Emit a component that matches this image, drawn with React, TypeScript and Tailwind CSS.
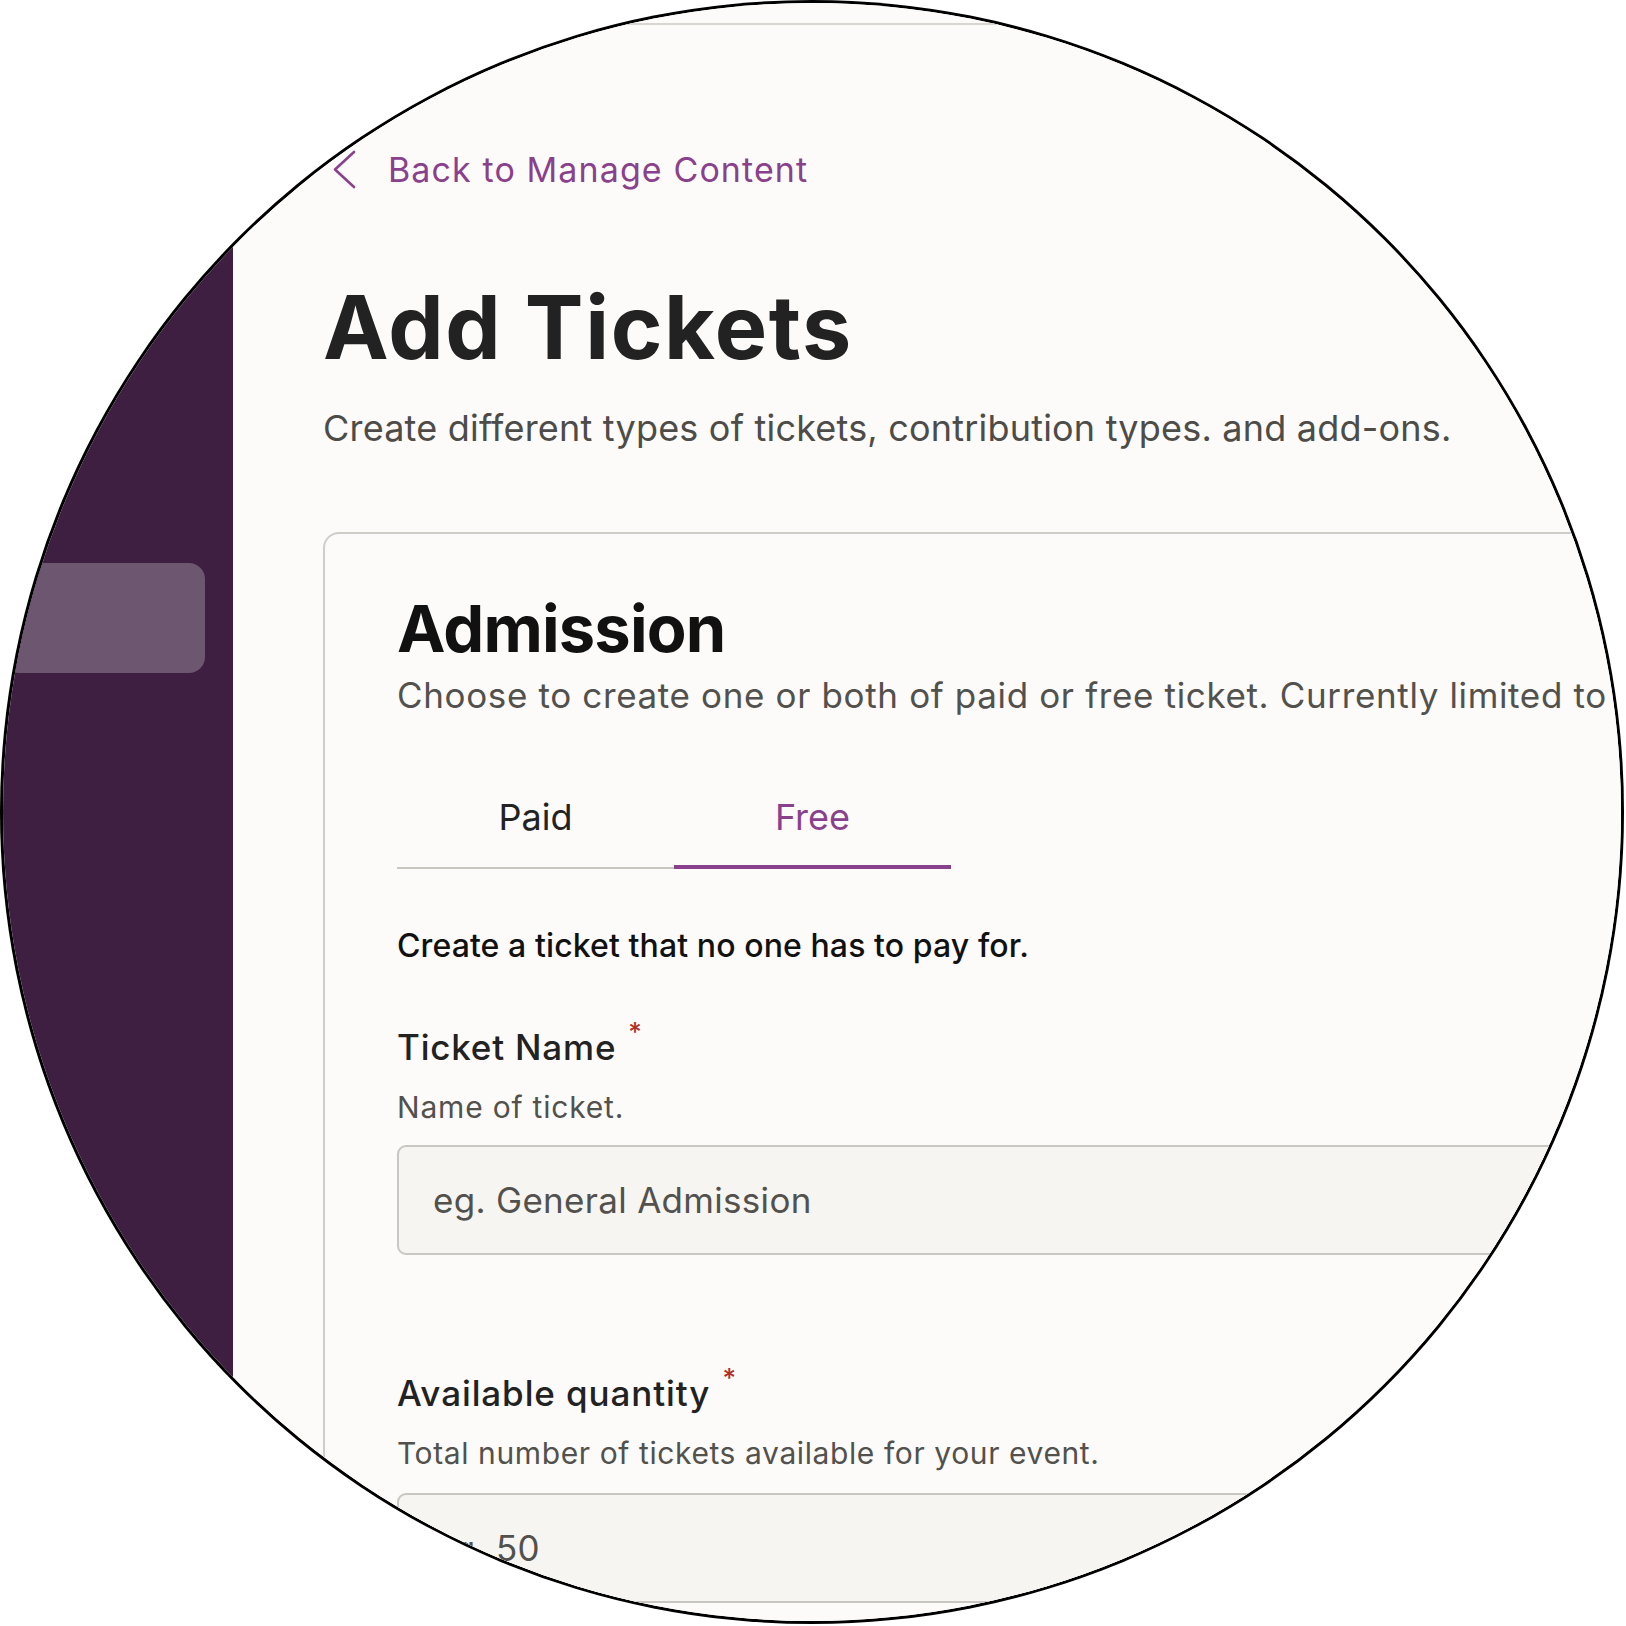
import React from "react";

const PURPLE = "#8A418D";

function Chevron() {
  return (
    <svg width="30" height="40" viewBox="0 0 30 40" className="ml-[7px] shrink-0">
      <path d="M24 2 L5 19.5 L24 37" fill="none" stroke={PURPLE} strokeWidth="2.6" strokeLinecap="round" strokeLinejoin="round" />
    </svg>
  );
}

function Required() {
  return <span className="relative -top-[19px] ml-[12px] text-[26px] text-[#B0302A]">*</span>;
}

export default function App() {
  return (
    <div className="w-[1626px] h-[1626px] bg-white p-[3px] font-['Inter','Liberation_Sans',sans-serif]">
      <div className="w-[1618px] h-[1618px] rounded-full overflow-hidden ring-[3px] ring-black flex">
        {/* sidebar */}
        <aside className="w-[230px] shrink-0 bg-[#3F1F41]">
          <div className="mt-[560px] h-[110px] w-[202px] rounded-[16px] bg-[#6D566F]" />
        </aside>

        {/* main */}
        <main className="flex-1 bg-[#FCFBF9] flex flex-col">
          <div className="h-[22px] shrink-0 border-b-2 border-[#D8D6D0]" />
          <div className="pl-[90px]">
            <a className="mt-[125px] h-[40px] flex items-center">
              <Chevron />
              <span className="ml-[28px] text-[34px] leading-none tracking-[1.1px] text-[#8A418D]">Back to Manage Content</span>
            </a>

            <h1 className="mt-[93px] text-[88px] leading-none font-bold tracking-[1.6px] text-[#222222]">Add Tickets</h1>
            <p className="mt-[39px] text-[36px] leading-none tracking-[0.2px] text-[#4D4C49] whitespace-nowrap">
              Create different types of tickets, contribution types. and add-ons.
            </p>

            <section className="mt-[86px] w-[1500px] border-2 border-[#CFCDC8] rounded-[16px] pl-[72px] pt-[62px] pb-[80px]">
              <h2 className="text-[65px] leading-none font-bold tracking-[-0.8px] text-[#111111]">Admission</h2>
              <p className="mt-[17px] text-[35px] leading-none tracking-[0.64px] text-[#52514D] whitespace-nowrap">
                Choose to create one or both of paid or free ticket. Currently limited to
              </p>

              <div className="mt-[86px] w-[554px] flex border-b-2 border-[#C9C7C1]">
                <button className="w-1/2 -mb-[2px] pb-[30px] border-b-4 border-transparent text-[36px] leading-none text-[#222222]">
                  Paid
                </button>
                <button className="w-1/2 -mb-[2px] pb-[30px] border-b-4 border-[#8A418D] text-[36px] leading-none text-[#8A418D]">
                  Free
                </button>
              </div>

              <p className="mt-[61px] text-[32px] leading-none font-medium tracking-[0.1px] text-[#111111]">
                Create a ticket that no one has to pay for.
              </p>

              <label className="mt-[68px] block text-[35px] leading-none font-medium tracking-[0.8px] text-[#222222]">
                Ticket Name
                <Required />
              </label>
              <p className="mt-[27px] text-[30px] leading-none tracking-[0.8px] text-[#52514D]">Name of ticket.</p>
              <input
                className="mt-[23px] block w-[1300px] h-[110px] rounded-[9px] border-2 border-[#C9C7C1] bg-[#F6F5F2] pl-[34px] text-[35px] tracking-[0.3px] text-[#222222] placeholder:text-[#52514D] outline-none"
                placeholder="eg. General Admission"
              />

              <label className="mt-[121px] block text-[35px] leading-none font-medium tracking-[0.9px] text-[#222222]">
                Available quantity
                <Required />
              </label>
              <p className="mt-[27px] text-[30px] leading-none tracking-[0.6px] text-[#52514D]">
                Total number of tickets available for your event.
              </p>
              <input
                className="mt-[25px] block w-[1300px] h-[110px] rounded-[9px] border-2 border-[#C9C7C1] bg-[#F6F5F2] pl-[34px] text-[35px] tracking-[0.3px] text-[#222222] placeholder:text-[#52514D] outline-none"
                placeholder="eg. 50"
              />
            </section>
          </div>
        </main>
      </div>
    </div>
  );
}
